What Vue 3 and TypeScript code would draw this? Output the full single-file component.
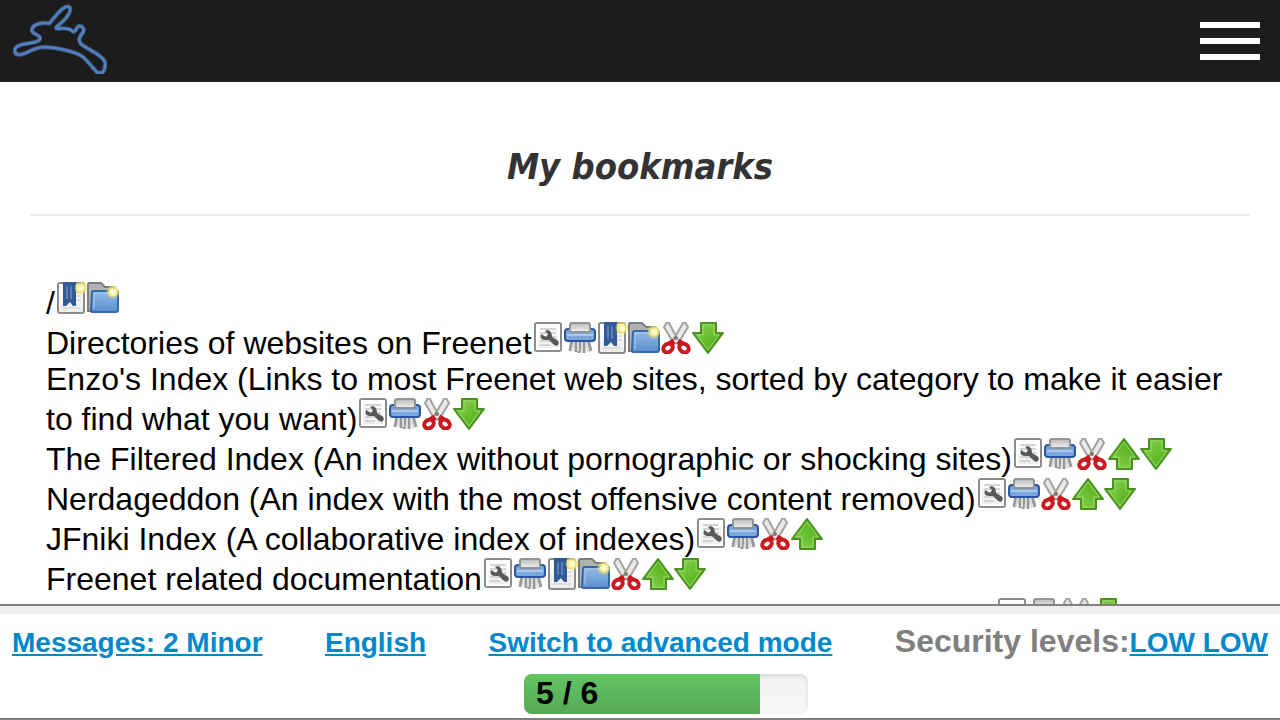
<script setup lang="ts">
type Action = 'edit' | 'delete' | 'addBookmark' | 'addFolder' | 'cut' | 'up' | 'down'

interface Entry {
  name: string
  actions: Action[]
}

const labels: Record<Action, string> = {
  edit: 'Edit',
  delete: 'Delete',
  addBookmark: 'Add bookmark',
  addFolder: 'Add category',
  cut: 'Cut',
  up: 'Move up',
  down: 'Move down',
}

const entries: Entry[] = [
  { name: '/', actions: ['addBookmark', 'addFolder'] },
  { name: 'Directories of websites on Freenet', actions: ['edit', 'delete', 'addBookmark', 'addFolder', 'cut', 'down'] },
  {
    name: "Enzo's Index (Links to most Freenet web sites, sorted by category to make it easier to find what you want)",
    actions: ['edit', 'delete', 'cut', 'down'],
  },
  { name: 'The Filtered Index (An index without pornographic or shocking sites)', actions: ['edit', 'delete', 'cut', 'up', 'down'] },
  { name: 'Nerdageddon (An index with the most offensive content removed)', actions: ['edit', 'delete', 'cut', 'up', 'down'] },
  { name: 'JFniki Index (A collaborative index of indexes)', actions: ['edit', 'delete', 'cut', 'up'] },
  { name: 'Freenet related documentation', actions: ['edit', 'delete', 'addBookmark', 'addFolder', 'cut', 'up', 'down'] },
  { name: 'Freesite How-To (A guide to publishing your own Freenet websites)', actions: ['edit', 'delete', 'cut', 'down'] },
]

const connected = 5
const wanted = 6
const barWidth = `${Math.floor((connected / wanted) * 100)}%`
</script>

<template>
  <div class="page">
    <svg class="defs" width="0" height="0" aria-hidden="true">
      <defs>
        <linearGradient id="g-page" x1="0" y1="0" x2="0" y2="1">
          <stop offset="0" stop-color="#fff" /><stop offset="1" stop-color="#ececec" />
        </linearGradient>
        <linearGradient id="g-metal" x1="0" y1="0" x2="0" y2="1">
          <stop offset="0" stop-color="#b9b9b9" /><stop offset="1" stop-color="#f2f2f2" />
        </linearGradient>
        <linearGradient id="g-blue" x1="0" y1="0" x2="0" y2="1">
          <stop offset="0" stop-color="#93bbe6" /><stop offset="1" stop-color="#5c8fce" />
        </linearGradient>
        <linearGradient id="g-green" x1="0" y1="0" x2="1" y2="1">
          <stop offset="0" stop-color="#8fd455" /><stop offset="1" stop-color="#43a80c" />
        </linearGradient>
        <radialGradient id="g-glow">
          <stop offset="0" stop-color="#fffff0" /><stop offset="0.45" stop-color="#fbf3a0" />
          <stop offset="0.75" stop-color="#ecd767" stop-opacity="0.7" /><stop offset="1" stop-color="#f2e27a" stop-opacity="0" />
        </radialGradient>
      </defs>
    </svg>

    <header class="topbar">
      <a class="logo" href="#" aria-label="Freenet">
        <svg viewBox="39 12 282 210" width="94" height="70" fill="none" stroke-linejoin="round">
          <path v-for="layer in ['halo', 'line']" :key="layer" :class="layer" d="M293 218C284 212 263 182 248 170C226 154 170 143 135 141C108 141 91 153 75 160C62 166 45 167 44 152C43 141 60 134 80 131C100 128 121 124 120 114C120 104 98 104 96 92C94 76 117 68 135 69L148 70C160 58 172 38 188 26C200 16 213 18 210 32C206 50 190 64 176 75C166 82 166 87 175 86C196 84 212 87 218 94C232 98 226 80 238 78C250 78 254 90 248 99C236 112 236 123 242 131C262 148 304 163 314 184C318 198 312 212 308 218Z" />
        </svg>
      </a>
      <button class="menu" type="button" aria-label="Menu"><i /><i /><i /></button>
    </header>

    <main class="content">
      <h1>My bookmarks</h1>
      <ul class="bookmarks">
        <li v-for="entry in entries" :key="entry.name">
          <span>{{ entry.name }}</span><button v-for="action in entry.actions" :key="action" class="action" type="button" :aria-label="labels[action]">
            <svg viewBox="0 0 32 32" width="32" height="32">
              <g v-if="action === 'edit'">
                <rect x="3" y="1" width="26" height="28" rx="2" fill="url(#g-page)" stroke="#8b8d8a" stroke-width="2" />
                <rect x="5" y="3" width="22" height="24" fill="none" stroke="#fff" stroke-width="2" />
                <path d="M8 7H24M8 11H24M8 15H24M8 19H22M8 23H18" stroke="#d4d4d4" stroke-width="2" />
                <path d="M9 12C8 15 9 18 13 18L17 18L21 22Q24 25 26 23Q28 20 25 18L20 15C20 10 17 7 13 9L16 12L14 15Z" fill="#565956" />
              </g>
              <g v-else-if="action === 'delete'">
                <path d="M8 18L6 29M12 18V30M16 18L15 31M20 18V31M24 18L27 29" stroke="#969996" stroke-width="3" />
                <path d="M10 20L8 29M14 20V29M18 20V30M22 20L24 30" stroke="#d9dad9" stroke-width="2" />
                <rect x="1" y="7" width="30" height="12" rx="3" fill="#7ca6dc" stroke="#2b569c" stroke-width="2" />
                <path d="M3 13H29" stroke="#a7c8ef" stroke-width="2" />
                <rect x="6" y="1" width="20" height="9" rx="2" fill="url(#g-metal)" stroke="#929492" stroke-width="2" />
              </g>
              <g v-else-if="action === 'addBookmark'">
                <rect x="3" y="1" width="26" height="30" rx="2" fill="url(#g-page)" stroke="#8b8d8a" stroke-width="2" />
                <path d="M20 10H26M20 14H26M20 18H26M7 26H25" stroke="#ddd" stroke-width="2" />
                <path d="M8 0H21V24L18 24L15 20L11 24H8Z" fill="#315b98" />
                <path d="M12 4V17M16 4V17" stroke="#5c82b5" stroke-width="2" />
                <circle cx="26" cy="6" r="7" fill="url(#g-glow)" />
              </g>
              <g v-else-if="action === 'addFolder'">
                <path d="M1 29V2Q1 1 2 1H14L18 5H26Q28 5 28 8V29Z" fill="#b0b2af" stroke="#7c7e7c" stroke-width="2" />
                <path d="M6 9H30Q31 9 31 10V28Q31 30 29 30H5Q4 30 4 28L5 10Z" fill="url(#g-blue)" stroke="#3568ad" stroke-width="2" />
                <path d="M7 27V11H29" fill="none" stroke="#a8caef" stroke-width="1" />
                <circle cx="26" cy="10" r="7" fill="url(#g-glow)" />
              </g>
              <g v-else-if="action === 'cut'">
                <path d="M7 0L4 5L14 22L19 20L9 1Z" fill="#e9e9e8" stroke="#a1a3a1" stroke-width="2" />
                <path d="M25 0L28 5L18 22L12 20L23 1Z" fill="#e9e9e8" stroke="#a1a3a1" stroke-width="2" />
                <circle cx="16" cy="16" r="2" fill="#777" />
                <path d="M14 19L9 22M18 19L23 22" stroke="#c9151b" stroke-width="5" />
                <ellipse cx="8" cy="26" rx="5" ry="4" fill="none" stroke="#cb191f" stroke-width="4" transform="rotate(-35 8 26)" />
                <ellipse cx="24" cy="26" rx="5" ry="4" fill="none" stroke="#cb191f" stroke-width="4" transform="rotate(35 24 26)" />
              </g>
              <g v-else :transform="action === 'up' ? 'matrix(1 0 0 -1 0 32)' : undefined">
                <path d="M9 1H24V11H31L16 31L1 11H9Z" fill="url(#g-green)" stroke="#4a9120" stroke-width="2" stroke-linejoin="round" />
                <path d="M11 3H22V13H27L16 28L5 13H11Z" fill="none" stroke="#9bd96a" stroke-width="1" />
              </g>
            </svg>
          </button>
        </li>
      </ul>
    </main>

    <footer class="status">
      <div class="status-row">
        <a href="#">Messages: 2 Minor</a>
        <a href="#">English</a>
        <a href="#">Switch to advanced mode</a>
        <div class="security">Security levels:<a href="#">LOW </a><a href="#">LOW</a></div>
      </div>
      <div class="peers">
        <div class="progress" role="progressbar" aria-label="Connected peers" :aria-valuenow="connected" aria-valuemin="0" :aria-valuemax="wanted">
          <div class="bar" :style="{ width: barWidth }">{{ connected }} / {{ wanted }}</div>
        </div>
      </div>
    </footer>
  </div>
</template>

<style>
body {
  margin: 0;
  background: #fff;
}
</style>

<style scoped>
.page {
  height: 100vh;
  display: flex;
  flex-direction: column;
  overflow: hidden;
  font-family: "Liberation Sans", Arial, sans-serif;
  color: #000;
}
.defs {
  position: absolute;
}
.topbar {
  flex: none;
  display: flex;
  justify-content: space-between;
  align-items: flex-start;
  height: 80px;
  padding: 0 20px 0 13px;
  background: #1c1c1c;
  border-bottom: 2px solid #252222;
}
.logo {
  padding-top: 4px;
}
.logo svg {
  display: block;
}
.halo {
  stroke: #3a5378;
  stroke-width: 13px;
}
.line {
  stroke: #527ebd;
  stroke-width: 8px;
}
.menu {
  display: flex;
  flex-direction: column;
  gap: 10px;
  width: 60px;
  margin: 22px 0 0;
  padding: 0;
  border: 0;
  background: none;
}
.menu i {
  width: 100%;
  height: 6px;
  background: #fff;
}
.content {
  flex: 1;
  min-height: 0;
  overflow: hidden;
  padding: 0 30px;
}
h1 {
  margin: 0;
  padding: 64px 0 26px;
  border-bottom: 2px solid #eee;
  font: italic bold 36px/42px Tahoma, "DejaVu Sans Condensed", "DejaVu Sans", sans-serif;
  text-align: center;
  color: #333;
}
.bookmarks {
  list-style: none;
  margin: 65px 0 0;
  padding: 0 16px;
  font-size: 32px;
  line-height: 36px;
}
.action {
  width: 32px;
  height: 32px;
  margin: 1px 0 0;
  padding: 0;
  border: 0;
  background: none;
  vertical-align: baseline;
}
.action svg {
  display: block;
}
.status {
  flex: none;
  border-top: 2px solid #808080;
  border-bottom: 2px solid #808080;
  background: #fff;
  font-weight: bold;
}
.status-row {
  display: flex;
  justify-content: space-between;
  align-items: baseline;
  padding: 9px 12px 0;
  border-top: 8px solid #eee;
  font-size: 28px;
  line-height: 36px;
}
.status a {
  color: #0088cc;
  font-size: 28px;
  text-decoration: underline;
}
.security {
  font-size: 32px;
  color: #808080;
  white-space: pre;
}
.peers {
  display: flex;
  justify-content: center;
  padding: 13px 0 4px 52px;
}
.progress {
  width: 284px;
  height: 40px;
  border-radius: 8px;
  overflow: hidden;
  background: linear-gradient(#f0f0f0, #f9f9f9);
  box-shadow: inset 0 2px 4px rgba(0, 0, 0, 0.1);
}
.bar {
  box-sizing: border-box;
  height: 100%;
  padding-left: 12px;
  background: linear-gradient(#62c462, #57a957);
  font-size: 32px;
  line-height: 38px;
}
</style>
